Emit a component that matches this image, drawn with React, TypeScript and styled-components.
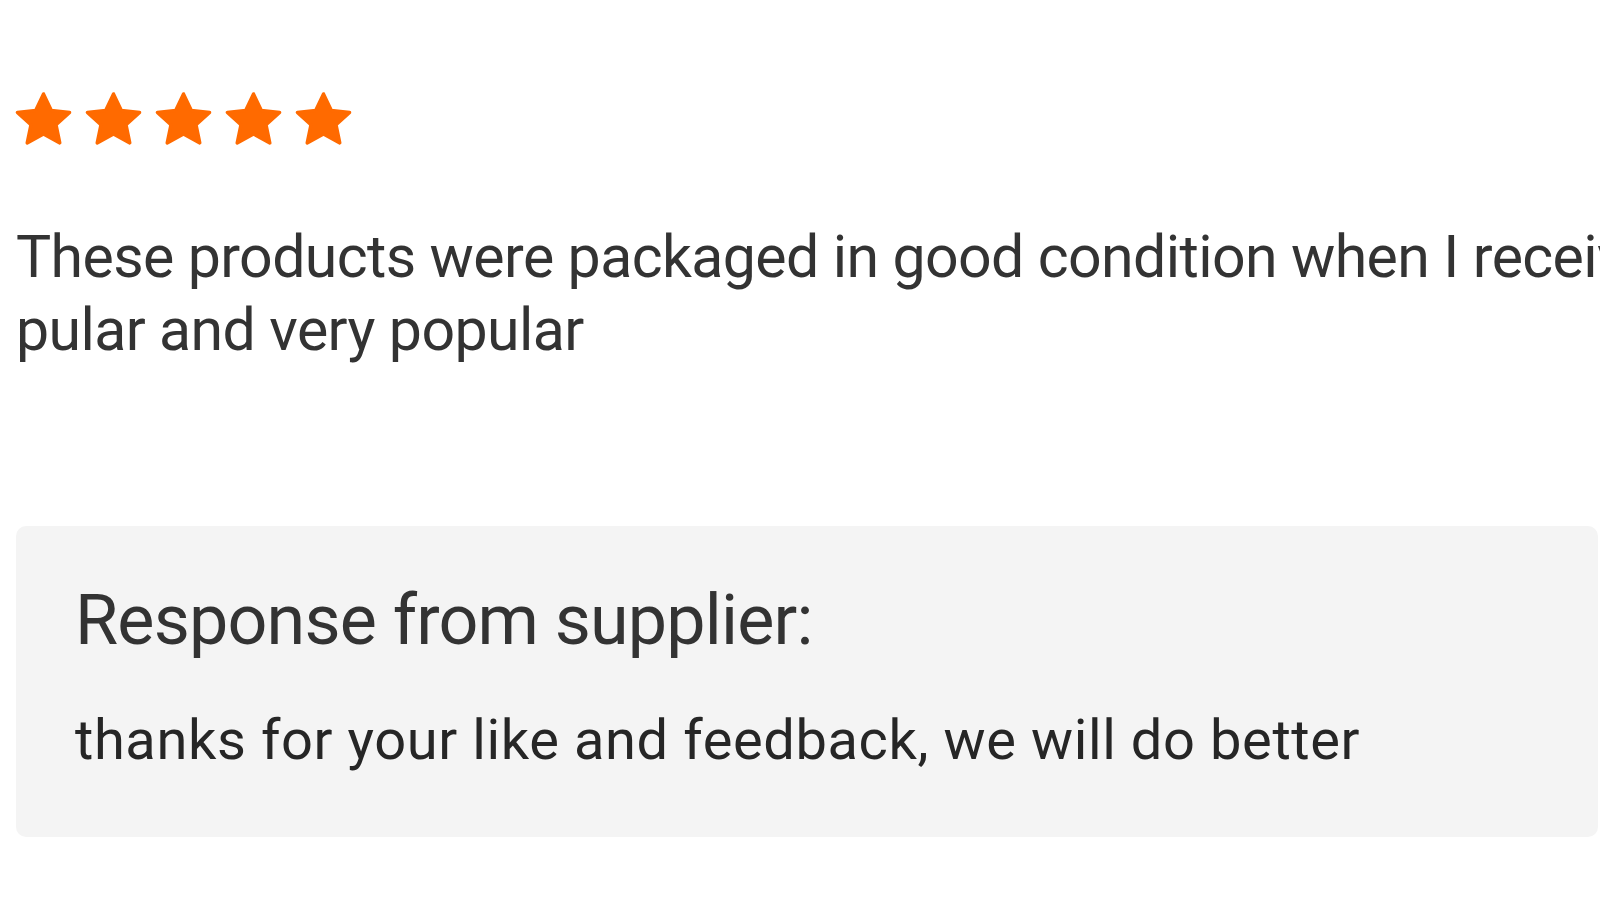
import React from "react";
import styled, { createGlobalStyle } from "styled-components";

const Global = createGlobalStyle`
  html, body { margin: 0; padding: 0; background: #ffffff; overflow: hidden; }
  body { font-family: Roboto, "Liberation Sans", Arial, sans-serif; }
`;

const Page = styled.div`
  width: 1600px;
  height: 900px;
  overflow: hidden;
  box-sizing: border-box;
  padding: 91px 0 0 14px;
`;

const Stars = styled.div`
  display: flex;
  gap: 11px;
  height: 58px;
  align-items: center;
`;

const StarIcon = styled.svg`
  width: 59px;
  height: 58px;
  display: block;
  flex: none;
`;

const ReviewText = styled.p`
  margin: 71px 0 0 2px;
  font-size: 59px;
  line-height: 73px;
  letter-spacing: -0.6px;
  color: #333333;
  white-space: nowrap;
`;

const Line = styled.span`
  display: block;
`;

const ResponseBox = styled.div`
  margin: 160px 0 0 2px;
  width: 1582px;
  height: 311px;
  box-sizing: border-box;
  background: #f4f4f4;
  border-radius: 10px;
  padding: 49px 0 0 59px;
`;

const ResponseTitle = styled.div`
  font-size: 70px;
  line-height: 90px;
  letter-spacing: -0.8px;
  color: #333333;
`;

const ResponseBody = styled.div`
  margin-top: 40px;
  font-size: 56px;
  line-height: 70px;
  letter-spacing: 0.6px;
  color: #262626;
`;

const Star = () => (
  <StarIcon viewBox="0 0 24 24">
    <path
      d="M12 1.2l3.2 6.8 7.6.9-5.6 5.1 1.55 7.5L12 17.8l-6.75 3.7 1.55-7.5-5.6-5.1 7.6-.9z"
      fill="#ff6a00"
      stroke="#ff6a00"
      strokeWidth="1.4"
      strokeLinejoin="round"
    />
  </StarIcon>
);

export default function App() {
  return (
    <>
      <Global />
      <Page>
        <Stars>
          {[0, 1, 2, 3, 4].map((i) => (
            <Star key={i} />
          ))}
        </Stars>
        <ReviewText>
          <Line>These products were packaged in good condition when I received them, very po</Line>
          <Line>pular and very popular</Line>
        </ReviewText>
        <ResponseBox>
          <ResponseTitle>Response from supplier:</ResponseTitle>
          <ResponseBody>thanks for your like and feedback, we will do better</ResponseBody>
        </ResponseBox>
      </Page>
    </>
  );
}
